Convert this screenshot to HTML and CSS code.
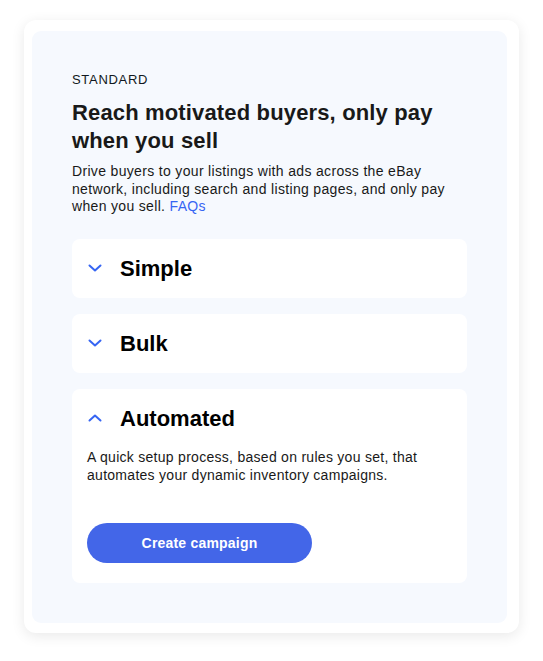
FILE: index.html
```html
<!DOCTYPE html>
<html lang="en">
<head>
<meta charset="utf-8">
<title>Standard</title>
<link rel="stylesheet" href="styles.css">
</head>
<body>
<div class="outer">
  <div class="panel">
    <div class="eyebrow">STANDARD</div>
    <h1 class="title">Reach motivated buyers, only pay when you sell</h1>
    <p class="lead">Drive buyers to your listings with ads across the eBay network, including search and listing pages, and only pay when you sell. <a class="link" href="#">FAQs</a></p>
    <div class="list">
      <div class="item">
        <div class="item-head">
          <svg class="chev" width="14" height="14" viewBox="0 0 14 14"><path d="M1.5 4.5 L7 9.5 L12.5 4.5" fill="none" stroke="#3665f3" stroke-width="2" stroke-linecap="round" stroke-linejoin="round"/></svg>
          <span class="item-title">Simple</span>
        </div>
      </div>
      <div class="item">
        <div class="item-head">
          <svg class="chev" width="14" height="14" viewBox="0 0 14 14"><path d="M1.5 4.5 L7 9.5 L12.5 4.5" fill="none" stroke="#3665f3" stroke-width="2" stroke-linecap="round" stroke-linejoin="round"/></svg>
          <span class="item-title">Bulk</span>
        </div>
      </div>
      <div class="item item-open">
        <div class="item-head">
          <svg class="chev" width="14" height="14" viewBox="0 0 14 14"><path d="M1.5 9.5 L7 4.5 L12.5 9.5" fill="none" stroke="#3665f3" stroke-width="2" stroke-linecap="round" stroke-linejoin="round"/></svg>
          <span class="item-title">Automated</span>
        </div>
        <p class="item-desc">A quick setup process, based on rules you set, that automates your dynamic inventory campaigns.</p>
        <button class="btn" type="button">Create campaign</button>
      </div>
    </div>
  </div>
</div>
</body>
</html>
```

FILE: styles.css
```css
* { box-sizing: border-box; }
html, body { margin: 0; padding: 0; background: #ffffff; }
body {
  font-family: "Liberation Sans", Arial, Helvetica, sans-serif;
  color: #111820;
  padding: 20px 24px 28px 24px;
}
.outer {
  width: 495px;
  background: #ffffff;
  border-radius: 12px;
  box-shadow: 0 3px 14px rgba(0, 0, 0, 0.09);
  padding: 11px 12px 10px 8px;
}
.panel {
  background: #f6f9fe;
  border-radius: 9px;
  padding: 41px 40px 40px 40px;
}
.eyebrow {
  font-size: 13px;
  line-height: 16px;
  letter-spacing: 0.7px;
  color: #111820;
}
.title {
  margin: 11px 0 0 0;
  font-size: 22px;
  line-height: 28px;
  font-weight: 700;
  letter-spacing: 0.15px;
  color: #191919;
}
.lead {
  margin: 8px 0 0 0;
  font-size: 14px;
  line-height: 17.5px;
  letter-spacing: 0.33px;
  color: #191919;
}
.link { color: #3665f3; text-decoration: none; }
.list {
  margin-top: 23px;
  display: flex;
  flex-direction: column;
  gap: 16px;
}
.item {
  background: #ffffff;
  border-radius: 8px;
  padding: 16px;
}
.item-head {
  display: flex;
  align-items: center;
  height: 27px;
}
.chev { display: block; margin-right: 18px; flex: none; }
.item-title {
  font-size: 22px;
  line-height: 27px;
  font-weight: 700;
  color: #000000;
}
.item-open { padding-bottom: 20px; }
.item-desc {
  margin: 16px 0 0 -1px;
  font-size: 14px;
  line-height: 18px;
  letter-spacing: 0.28px;
  color: #191919;
}
.btn {
  display: block;
  margin: 39px 0 0 -1px;
  width: 225px;
  height: 40px;
  border: 0;
  border-radius: 20px;
  background: #4366e8;
  color: #ffffff;
  font-family: "Liberation Sans", Arial, Helvetica, sans-serif;
  font-size: 14px;
  font-weight: 700;
  letter-spacing: 0.2px;
  cursor: pointer;
}
```
